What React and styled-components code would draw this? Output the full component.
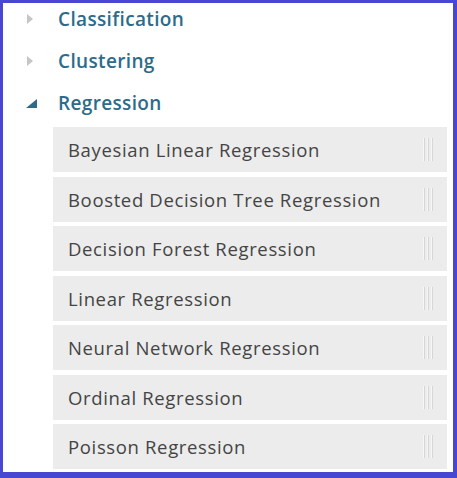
import React from "react";
import styled, { createGlobalStyle } from "styled-components";

const Global = createGlobalStyle`
  html, body {
    margin: 0;
    padding: 0;
    background: #ffffff;
  }
  body {
    font-family: "Open Sans", "Noto Sans", sans-serif;
  }
`;

const Frame = styled.div`
  width: 457px;
  height: 478px;
  box-sizing: border-box;
  border-style: solid;
  border-color: #4747d2;
  border-width: 3px 4px 6px 3px;
  background: #ffffff;
  overflow: hidden;
`;

const Header = styled.div`
  display: flex;
  align-items: center;
  height: 32px;
  margin-bottom: 10px;
  color: #2d6b8b;
  font-size: 19px;
  letter-spacing: 0.35px;
  font-weight: 600;
`;

const Arrow = styled.div`
  width: 32px;
  margin-left: 23px;
  display: flex;
  align-items: center;
`;

const ItemList = styled.div`
  display: flex;
  flex-direction: column;
  gap: 4.5px;
  margin: -2px 6px 0 50px;
`;

const Item = styled.div`
  height: 45px;
  background: #ececec;
  display: flex;
  align-items: center;
  justify-content: space-between;
  padding: 0 14px 0 15px;
  color: #444444;
  font-size: 18.5px;
  letter-spacing: 0.65px;
`;

const Grip = styled.div`
  display: flex;
  gap: 2px;
  height: 23px;
  span {
    width: 2px;
    height: 100%;
    background: #d6d6d6;
    border-left: 1px solid #f6f6f6;
    box-sizing: border-box;
  }
`;

const Collapsed = () => (
  <svg width="8" height="12" viewBox="0 0 8 12">
    <path d="M1 1 L7 6 L1 11 Z" fill="#c6c6c6" />
  </svg>
);

const Expanded = () => (
  <svg width="12" height="9" viewBox="0 0 12 9">
    <path d="M11 0 L11 9 L0 9 Z" fill="#2d6b8b" />
  </svg>
);

const items = [
  "Bayesian Linear Regression",
  "Boosted Decision Tree Regression",
  "Decision Forest Regression",
  "Linear Regression",
  "Neural Network Regression",
  "Ordinal Regression",
  "Poisson Regression",
];

export default function App() {
  return (
    <Frame>
      <Global />
      <Header>
        <Arrow>
          <Collapsed />
        </Arrow>
        Classification
      </Header>
      <Header>
        <Arrow>
          <Collapsed />
        </Arrow>
        Clustering
      </Header>
      <Header>
        <Arrow>
          <Expanded />
        </Arrow>
        Regression
      </Header>
      <ItemList>
        {items.map((name) => (
          <Item key={name}>
            {name}
            <Grip>
              <span />
              <span />
              <span />
            </Grip>
          </Item>
        ))}
      </ItemList>
    </Frame>
  );
}
